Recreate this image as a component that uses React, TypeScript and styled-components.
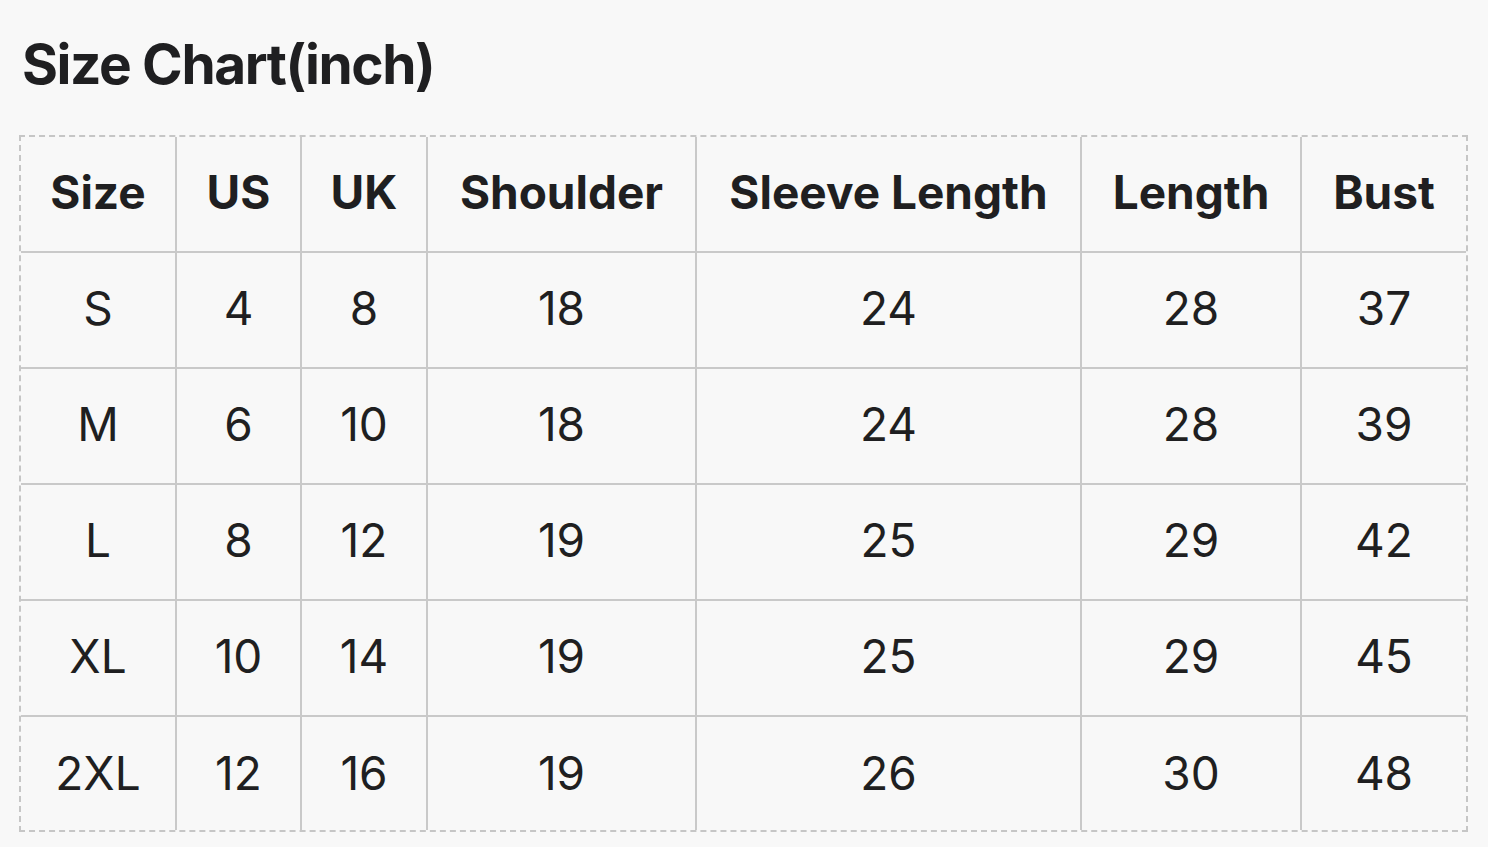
import styled, { createGlobalStyle } from "styled-components";

const GlobalStyle = createGlobalStyle`
  html, body {
    margin: 0;
    padding: 0;
    background: #f8f8f8;
  }

  body {
    font-family: Inter, "Liberation Sans", Arial, sans-serif;
    color: #1f1f21;
  }
`;

const Page = styled.div`
  padding: 31px 20px 0 19px;
  width: 1449px;
`;

const Title = styled.h1`
  margin: 0 0 37px 3px;
  font-size: 55px;
  line-height: 67px;
  font-weight: 700;
  letter-spacing: -1.4px;
`;

const TableFrame = styled.div`
  border: 2px dashed #c6c6c6;
  box-sizing: border-box;
  width: 1449px;
`;

const Table = styled.table`
  width: 100%;
  border-collapse: separate;
  border-spacing: 0;
  table-layout: fixed;
`;

const Cell = styled.td<{ $head?: boolean }>`
  height: 116px;
  padding: 0 0 4px 0;
  box-sizing: border-box;
  text-align: center;
  vertical-align: middle;
  font-size: 46px;
  font-weight: ${(p) => (p.$head ? 700 : 400)};
  border-right: 2px solid #c9c9c9;
  border-bottom: 2px solid #c9c9c9;

  &:last-child {
    border-right: none;
  }

  tr:last-child > & {
    height: 113px;
    padding-bottom: 2px;
    border-bottom: none;
  }
`;

const columns = [
  { label: "Size", width: 156 },
  { label: "US", width: 125 },
  { label: "UK", width: 126 },
  { label: "Shoulder", width: 269 },
  { label: "Sleeve Length", width: 385 },
  { label: "Length", width: 220 },
  { label: "Bust", width: 164 },
];

const rows = [
  ["S", "4", "8", "18", "24", "28", "37"],
  ["M", "6", "10", "18", "24", "28", "39"],
  ["L", "8", "12", "19", "25", "29", "42"],
  ["XL", "10", "14", "19", "25", "29", "45"],
  ["2XL", "12", "16", "19", "26", "30", "48"],
];

export default function App() {
  return (
    <>
      <GlobalStyle />
      <Page>
        <Title>Size Chart(inch)</Title>
        <TableFrame>
          <Table>
            <colgroup>
              {columns.map((c) => (
                <col key={c.label} style={{ width: c.width }} />
              ))}
            </colgroup>
            <tbody>
              <tr>
                {columns.map((c) => (
                  <Cell as="th" key={c.label} $head>
                    {c.label}
                  </Cell>
                ))}
              </tr>
              {rows.map((r) => (
                <tr key={r[0]}>
                  {r.map((v, i) => (
                    <Cell key={i}>{v}</Cell>
                  ))}
                </tr>
              ))}
            </tbody>
          </Table>
        </TableFrame>
      </Page>
    </>
  );
}
